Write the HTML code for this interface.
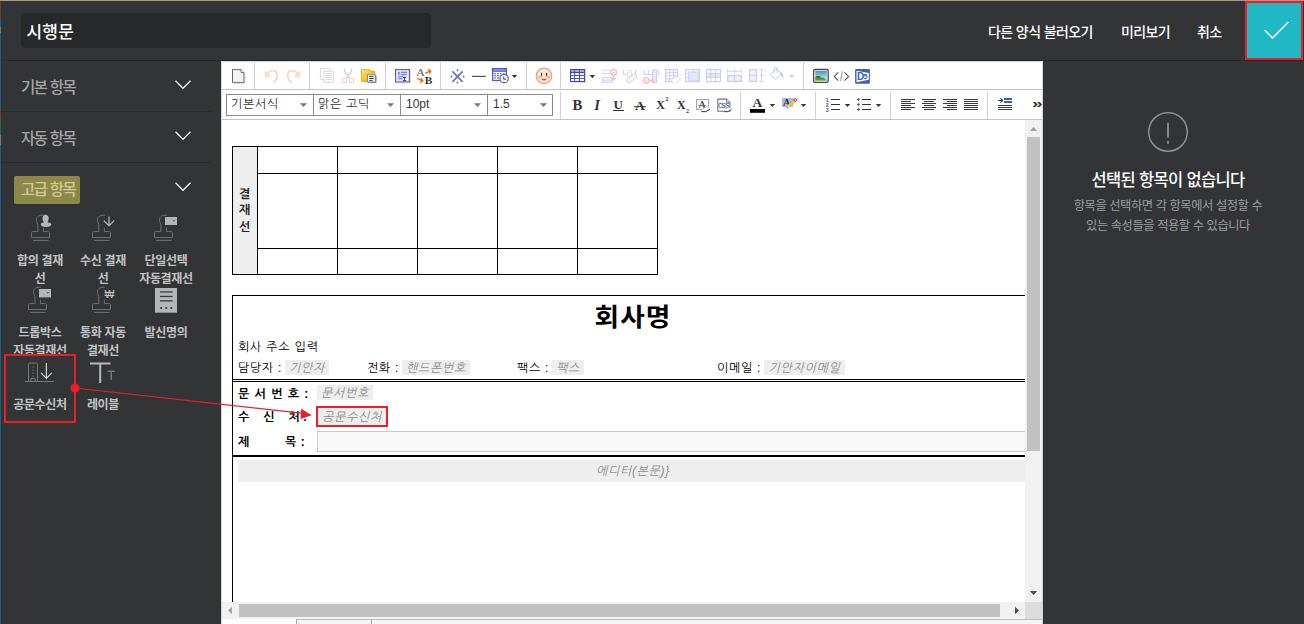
<!DOCTYPE html>
<html lang="ko">
<head>
<meta charset="utf-8">
<title>시행문</title>
<style>
*{box-sizing:border-box;margin:0;padding:0}
html,body{width:1304px;height:624px;overflow:hidden;background:#333436}
body{position:relative;font-family:"Liberation Sans","Noto Sans CJK KR",sans-serif;color:#fff}
.abs{position:absolute}
#topline{left:0;top:0;width:1304px;height:1px;background:#b0948c}
#leftstrip{left:0;top:1px;width:1px;height:623px;background:linear-gradient(#6a4034 0 19px,#1d5f86 19px 26px,#6f7a84 26px 32px,#1d5f86 32px 109px,#7a3a30 109px 117px,#2a6a4a 117px 134px,#6f7a84 134px 144px,#1d5f86 144px)}
#topbar{left:0;top:0;width:1304px;height:61px;border-bottom:1px solid #27282a}
#title{left:21px;top:13px;width:410px;height:35px;background:#27282a;border-radius:4px}
#title span{position:absolute;left:5.5px;top:6px;font-size:17px;line-height:27px;font-weight:500;letter-spacing:0.2px;color:#fff}
.toplink{top:20.7px;font-size:14px;line-height:22px;font-weight:500;color:#fff;letter-spacing:-0.6px;white-space:nowrap}
#okbtn{left:1245px;top:1px;width:58px;height:59px;background:#1fb8c4;border:2px solid #e8202a}
.sec{left:21px;font-size:15.5px;line-height:24px;color:#a4a6a8;letter-spacing:-1.4px;white-space:nowrap;font-weight:500}
.hr{left:1px;width:210px;height:1px;background:#2a2b2d}
.chev{left:174px;width:18px;height:10px}
.item{width:80px;text-align:center;font-size:12px;line-height:18px;font-weight:700;color:#c2c3c4;letter-spacing:-0.3px;white-space:nowrap}
#editor{left:221px;top:61px;width:822px;height:563px;background:#fff}
.tbtxt{font-family:"Liberation Sans","NanumGothic",sans-serif;font-size:12px;line-height:20px;color:#333;white-space:nowrap;top:94px}
.ser{font-family:"Liberation Serif",serif;color:#333;white-space:nowrap;line-height:20px}
.doc{font-family:"Liberation Sans","NanumGothic",sans-serif;font-size:12px;line-height:16px;color:#000;white-space:nowrap;letter-spacing:0.7px}
.tag{background:#eee;color:#8c8c8c;font-style:italic;height:15px;line-height:17px;font-size:12px;font-family:"Liberation Sans","NanumGothic",sans-serif;white-space:nowrap;text-align:center;letter-spacing:0.7px;overflow:visible}
#rtitle{left:1018px;top:168px;width:300px;text-align:center;font-size:16.5px;line-height:24px;font-weight:500;color:#fff;letter-spacing:-0.65px}
#rdesc{left:1018px;top:197px;width:300px;text-align:center;font-size:12.3px;line-height:19.5px;color:#9c9ea0;letter-spacing:-0.45px}
</style>
</head>
<body>
<div class="abs" id="topbar"></div>
<div class="abs" id="topline"></div>
<div class="abs" id="leftstrip"></div>
<div class="abs" id="title"><span>시행문</span></div>
<div class="abs toplink" style="left:988px">다른 양식 불러오기</div>
<div class="abs toplink" style="left:1121px">미리보기</div>
<div class="abs toplink" style="left:1197px">취소</div>
<div class="abs" id="okbtn"><svg width="54" height="55" viewBox="0 0 54 55"><path d="M17.5 27 L25.5 35 L41.5 19" fill="none" stroke="#fff" stroke-width="1.4"/></svg></div>
<div class="abs sec" style="top:76px">기본 항목</div>
<svg class="abs chev" style="top:80px" viewBox="0 0 18 10"><path d="M1.5 0.7 L9 8.3 L16.5 0.7" fill="none" stroke="#f4f4f4" stroke-width="1.25"/></svg>
<div class="abs hr" style="top:111px"></div>
<div class="abs sec" style="top:127px">자동 항목</div>
<svg class="abs chev" style="top:131px" viewBox="0 0 18 10"><path d="M1.5 0.7 L9 8.3 L16.5 0.7" fill="none" stroke="#f4f4f4" stroke-width="1.25"/></svg>
<div class="abs hr" style="top:162px"></div>
<div class="abs" style="left:14px;top:176px;width:66px;height:28px;background:#8c8848;border-radius:2px"></div>
<div class="abs sec" style="top:178px;color:#cfcb94">고급 항목</div>
<svg class="abs chev" style="top:182px" viewBox="0 0 18 10"><path d="M1.5 0.7 L9 8.3 L16.5 0.7" fill="none" stroke="#f4f4f4" stroke-width="1.25"/></svg>
<div class="abs item" style="left:0px;top:252px">합의 결재<br>선</div>
<div class="abs item" style="left:63px;top:252px">수신 결재<br>선</div>
<div class="abs item" style="left:126px;top:252px">단일선택<br>자동결재선</div>
<div class="abs item" style="left:0px;top:324px">드롭박스<br>자동결재선</div>
<div class="abs item" style="left:63px;top:324px">통화 자동<br>결재선</div>
<div class="abs item" style="left:126px;top:324px">발신명의</div>
<div class="abs" style="left:4px;top:354px;width:72px;height:69px;background:#333436;border:2px solid #e8202a"></div>
<div class="abs item" style="left:0px;top:396px">공문수신처</div>
<div class="abs item" style="left:63px;top:396px">레이블</div>
<div class="abs" id="editor"></div>
<div class="abs tbtxt" style="left:231px;letter-spacing:0.7px">기본서식</div>
<div class="abs tbtxt" style="left:318px;letter-spacing:0.7px">맑은 고딕</div>
<div class="abs tbtxt" style="left:406px">10pt</div>
<div class="abs tbtxt" style="left:493px">1.5</div>
<div class="abs ser" style="left:752.5px;top:92.5px;font-size:13.5px;font-weight:bold">A</div>
<div class="abs" style="left:1031.5px;top:94px;font-size:15px;line-height:20px;font-weight:bold;color:#333;font-family:'Liberation Sans',sans-serif;transform:scale(1.28,0.82);transform-origin:0 55%">»</div>
<div class="abs" style="left:233px;top:147px;width:24px;height:127px;background:#eee"></div>
<div class="abs doc" style="left:233px;top:186px;width:24px;text-align:center;font-weight:bold;line-height:16.3px;color:#222">결<br>재<br>선</div>
<div class="abs" style="left:432.5px;top:299.6px;width:400px;text-align:center;font-family:'Liberation Sans','Noto Sans CJK KR',sans-serif;font-size:24.5px;line-height:36px;font-weight:bold;color:#000;letter-spacing:1px;transform:scaleX(1.09)">회사명</div>
<div class="abs doc" style="left:238px;top:339px;letter-spacing:0.8px">회사 주소 입력</div>
<div class="abs doc" style="left:238px;top:360px">담당자 :</div>
<div class="abs tag" style="left:285px;top:360px;width:44px">기안자</div>
<div class="abs doc" style="left:367px;top:360px">전화 :</div>
<div class="abs tag" style="left:402px;top:360px;width:68px">핸드폰번호</div>
<div class="abs doc" style="left:517px;top:360px">팩스 :</div>
<div class="abs tag" style="left:552px;top:360px;width:32px">팩스</div>
<div class="abs doc" style="left:717px;top:360px">이메일 :</div>
<div class="abs tag" style="left:764px;top:360px;width:81px">기안자이메일</div>
<div class="abs doc" style="left:238px;top:386px;font-weight:bold;letter-spacing:5.3px">문서번호:</div>
<div class="abs tag" style="left:317px;top:385px;width:56px">문서번호</div>
<div class="abs doc" style="left:238px;top:408.5px;font-weight:bold;word-spacing:9.2px">수 신 처<span style="margin-left:2.5px">:</span></div>
<div class="abs" style="left:316px;top:406px;width:72px;height:21px;border:2px solid #e8202a;background:#eee"></div>
<div class="abs tag" style="left:318px;top:409px;width:68px;background:none">공문수신처</div>
<div class="abs doc" style="left:238px;top:434px;font-weight:bold">제</div>
<div class="abs doc" style="left:285px;top:434px;font-weight:bold;letter-spacing:4.5px">목:</div>
<div class="abs" style="left:317px;top:431px;width:709px;height:21px;border:1px solid #c8c8c8;border-right:none;background:#f9f9f9"></div>
<div class="abs" style="left:238px;top:460px;width:788px;height:22px;background:#eee"></div>
<div class="abs tag" style="left:560px;top:463px;width:146px;background:none;height:16px;line-height:17px">에디터(본문)}</div>
<svg class="abs" style="left:0;top:0" width="1304" height="624" viewBox="0 0 1304 624">
<g shape-rendering="crispEdges">
<rect x="221" y="61" width="822" height="1" fill="#d4d4d4"/><rect x="221" y="61" width="1" height="563" fill="#d4d4d4"/><rect x="1042" y="61" width="1" height="563" fill="#d4d4d4"/>
<rect x="222" y="89" width="820" height="1" fill="#c4c4c4"/><rect x="222" y="119" width="820" height="1" fill="#c4c4c4"/>
<rect x="254" y="62" width="1" height="27" fill="#cfcfcf"/>
<rect x="309" y="62" width="1" height="27" fill="#cfcfcf"/>
<rect x="385" y="62" width="1" height="27" fill="#cfcfcf"/>
<rect x="440" y="62" width="1" height="27" fill="#cfcfcf"/>
<rect x="526" y="62" width="1" height="27" fill="#cfcfcf"/>
<rect x="560" y="62" width="1" height="27" fill="#cfcfcf"/>
<rect x="803" y="62" width="1" height="27" fill="#cfcfcf"/>
<rect x="560" y="92" width="1" height="27" fill="#cfcfcf"/>
<rect x="740" y="92" width="1" height="27" fill="#cfcfcf"/>
<rect x="815" y="92" width="1" height="27" fill="#cfcfcf"/>
<rect x="890" y="92" width="1" height="27" fill="#cfcfcf"/>
<rect x="987" y="92" width="1" height="27" fill="#cfcfcf"/>
<rect x="226.5" y="94.5" width="326" height="21" fill="none" stroke="#8a8a8a"/>
<rect x="313" y="95" width="1" height="20" fill="#8a8a8a"/>
<rect x="400" y="95" width="1" height="20" fill="#8a8a8a"/>
<rect x="487" y="95" width="1" height="20" fill="#8a8a8a"/>
</g>
<path d="M300.0 103.3 h7 l-3.5 3.6z" fill="#777"/>
<path d="M387.0 103.3 h7 l-3.5 3.6z" fill="#777"/>
<path d="M474.0 103.3 h7 l-3.5 3.6z" fill="#777"/>
<path d="M540.0 103.3 h7 l-3.5 3.6z" fill="#777"/>
<path d="M511.8 74.9 h5.4 l-2.7 3.1z" fill="#333"/>
<path d="M589.7 75.1 h5.4 l-2.7 3.1z" fill="#333"/>
<path d="M789.1 74.9 h5.4 l-2.7 3.1z" fill="#cfcfcf"/>
<path d="M769.7 103.9 h5.4 l-2.7 3.1z" fill="#333"/>
<path d="M800.8 103.9 h5.4 l-2.7 3.1z" fill="#333"/>
<path d="M844.8 103.9 h5.4 l-2.7 3.1z" fill="#333"/>
<path d="M875.8 103.9 h5.4 l-2.7 3.1z" fill="#333"/>
<g shape-rendering="crispEdges">
<rect x="1025" y="120" width="17" height="482" fill="#f1f1f1"/><rect x="1027" y="137" width="13" height="314" fill="#c1c1c1"/>
<rect x="222" y="602" width="803" height="17" fill="#f1f1f1"/><rect x="239" y="604" width="761" height="13" fill="#c1c1c1"/>
<rect x="1025" y="602" width="17" height="17" fill="#dcdcdc"/>
<rect x="297" y="619" width="745" height="5" fill="#f4f4f4"/><rect x="296" y="619" width="746" height="1" fill="#bdbdbd"/><rect x="296" y="619" width="1" height="5" fill="#a8a8a8"/><rect x="371" y="619" width="1" height="5" fill="#a8a8a8"/>
</g>
<path d="M1029.8 131 h7.4 l-3.7 -4z" fill="#a3a3a3"/><path d="M1029.8 591 h7.4 l-3.7 4z" fill="#505050"/>
<path d="M232 606.8 v7.4 l-4 -3.7z" fill="#a3a3a3"/><path d="M1015 606.8 v7.4 l4 -3.7z" fill="#505050"/>
<g shape-rendering="crispEdges" fill="#000">
<rect x="232" y="146" width="426" height="1"/>
<rect x="257" y="173" width="401" height="1"/>
<rect x="257" y="248" width="401" height="1"/>
<rect x="232" y="274" width="426" height="1"/>
<rect x="232" y="146" width="1" height="129"/>
<rect x="257" y="146" width="1" height="129"/>
<rect x="337" y="146" width="1" height="129"/>
<rect x="417" y="146" width="1" height="129"/>
<rect x="497" y="146" width="1" height="129"/>
<rect x="577" y="146" width="1" height="129"/>
<rect x="657" y="146" width="1" height="129"/>
<rect x="232" y="295" width="793" height="1"/><rect x="232" y="295" width="1" height="307"/>
<rect x="233" y="379" width="792" height="1"/><rect x="233" y="381" width="792" height="1"/>
<rect x="233" y="455" width="792" height="2"/>
</g>
<g transform="translate(31 214)" fill="none" stroke="#6e7072" stroke-width="1">
<path d="M6.9 17.6 H1.5 Q0.5 17.6 0.5 18.6 V23.6 H18.5 V18.6 Q18.5 17.6 17.5 17.6 H12.4"/>
<path d="M6.9 17.6 V12 C6.9 9.5 5.4 8 5.4 5.8 C5.4 3 7.8 1.2 11 1.2 H13"/>
<path d="M12.4 17.6 V13.6"/><path d="M2 26.4 H17.5"/></g>
<ellipse cx="45.6" cy="218.4" rx="3.1" ry="3.5" fill="#b6b7b8"/><rect x="43.8" y="220" width="3.8" height="3.4" fill="#b6b7b8"/><ellipse cx="46" cy="224.6" rx="5.2" ry="2.3" fill="#b6b7b8"/><path d="M43.4 216.4 L45.4 214.6 L47.6 215.6z" fill="#b6b7b8"/>
<g transform="translate(92 214)" fill="none" stroke="#6e7072" stroke-width="1">
<path d="M6.9 17.6 H1.5 Q0.5 17.6 0.5 18.6 V23.6 H18.5 V18.6 Q18.5 17.6 17.5 17.6 H12.4"/>
<path d="M6.9 17.6 V12 C6.9 9.5 5.4 8 5.4 5.8 C5.4 3 7.8 1.2 11 1.2 H13"/>
<path d="M12.4 17.6 V13.6"/><path d="M2 26.4 H17.5"/></g>
<path d="M109 216.5 V225 M103.8 220.6 L109 225.6 L114.2 220.6" fill="none" stroke="#bbbcbd" stroke-width="1.2"/>
<g transform="translate(154 214)" fill="none" stroke="#6e7072" stroke-width="1">
<path d="M6.9 17.6 H1.5 Q0.5 17.6 0.5 18.6 V23.6 H18.5 V18.6 Q18.5 17.6 17.5 17.6 H12.4"/>
<path d="M6.9 17.6 V12 C6.9 9.5 5.4 8 5.4 5.8 C5.4 3 7.8 1.2 11 1.2 H13"/>
<path d="M12.4 17.6 V13.6"/><path d="M2 26.4 H17.5"/></g>
<rect x="165" y="217" width="12" height="8" fill="#b4b5b6"/><path d="M172.6 219.8 l1.4 1.4 l1.4 -1.4" fill="none" stroke="#444" stroke-width="0.8"/>
<g transform="translate(28 286)" fill="none" stroke="#6e7072" stroke-width="1">
<path d="M6.9 17.6 H1.5 Q0.5 17.6 0.5 18.6 V23.6 H18.5 V18.6 Q18.5 17.6 17.5 17.6 H12.4"/>
<path d="M6.9 17.6 V12 C6.9 9.5 5.4 8 5.4 5.8 C5.4 3 7.8 1.2 11 1.2 H13"/>
<path d="M12.4 17.6 V13.6"/><path d="M2 26.4 H17.5"/></g>
<rect x="39" y="289" width="12" height="8.4" fill="#b4b5b6"/><path d="M46.6 291.8 l1.4 1.4 l1.4 -1.4" fill="none" stroke="#444" stroke-width="0.8"/>
<g transform="translate(92 286)" fill="none" stroke="#6e7072" stroke-width="1">
<path d="M6.9 17.6 H1.5 Q0.5 17.6 0.5 18.6 V23.6 H18.5 V18.6 Q18.5 17.6 17.5 17.6 H12.4"/>
<path d="M6.9 17.6 V12 C6.9 9.5 5.4 8 5.4 5.8 C5.4 3 7.8 1.2 11 1.2 H13"/>
<path d="M12.4 17.6 V13.6"/><path d="M2 26.4 H17.5"/></g>
<text x="109.5" y="297.6" text-anchor="middle" font-family="Liberation Sans, sans-serif" font-size="10.5" fill="#c2c3c4">₩</text>
<rect x="155" y="288" width="22" height="24.7" fill="#b4b5b6"/>
<g fill="#3a3b3d"><rect x="160" y="291.3" width="12.6" height="1.3"/><rect x="160" y="295.8" width="12.6" height="1.3"/><rect x="160" y="300.2" width="12.6" height="1.3"/>
<circle cx="161.2" cy="308" r="1.1"/><circle cx="166.2" cy="308" r="1.1"/><circle cx="171.2" cy="308" r="1.1"/></g>
<g fill="none" stroke="#77797b" stroke-width="1"><path d="M28.5 381 V364.5 Q28.5 363 30 363 H36 Q37.5 363 37.5 364.5 V381"/><path d="M25 381.5 H54"/><path d="M30.8 381 V378.6 H35.2 V381"/></g>
<g fill="#77797b"><rect x="32.4" y="366.6" width="1.3" height="1"/><rect x="32.4" y="369.6" width="1.3" height="1"/><rect x="32.4" y="372.6" width="1.3" height="1"/><rect x="32.4" y="375.6" width="1.3" height="1"/></g>
<path d="M46.4 363 V378 M41 372.8 L46.4 378.4 L51.8 372.8" fill="none" stroke="#d0d1d2" stroke-width="1.2"/>
<path d="M90 363.6 H110.6 M100.2 363.6 V383" fill="none" stroke="#b8b9ba" stroke-width="2"/>
<path d="M107.6 371.3 H114.8 M111.2 371.3 V379.8" fill="none" stroke="#77797b" stroke-width="1.5"/>
<circle cx="75" cy="388" r="4.6" fill="#e8202a"/>
<path d="M75 388 L303 413.4" stroke="#e8202a" stroke-width="1.2" fill="none"/>
<path d="M311.8 415.3 L301.2 408.7 L300.6 418.9z" fill="#e8202a"/><path d="M232.5 69.6 H241 L244 72.6 V82.4 H232.5z" fill="#f4f4f4" stroke="#666" stroke-width="1"/><path d="M241 69.6 V72.6 H244" fill="#fff" stroke="#666" stroke-width="0.9"/><path d="M233.2 83.2 H244.9 V73.6" fill="none" stroke="#bdbdbd" stroke-width="0.8"/>
<g><path d="M267.6 73.6 C270.2 69.4 277.6 69 277.2 76 C277 79 275.6 81 273.6 82.4" fill="none" stroke="#f7d6c2" stroke-width="1.7" stroke-linecap="round"/><path d="M265.2 71.2 V76.8 H270.8z" fill="#fde0c0" stroke="#f7d6c2" stroke-width="0.8"/></g>
<g transform="translate(565 0) scale(-1 1)"><path d="M267.6 73.6 C270.2 69.4 277.6 69 277.2 76 C277 79 275.6 81 273.6 82.4" fill="none" stroke="#f7d6c2" stroke-width="1.7" stroke-linecap="round"/><path d="M265.2 71.2 V76.8 H270.8z" fill="#fde0c0" stroke="#f7d6c2" stroke-width="0.8"/></g>
<g fill="#fafafa" stroke="#dedede" stroke-width="1.1"><rect x="320.4" y="68.5" width="10" height="11" rx="1"/><rect x="323.8" y="71.5" width="10" height="11" rx="1"/></g>
<path d="M325.6 73.7h6.4M325.6 75.6h6.4M325.6 77.5h6.4M325.6 79.6h6.4" stroke="#d9d9d9" stroke-width="0.9"/>
<path d="M344.2 69.2 Q344.8 72.6 347.4 74.6 L349.6 78.4 M351.8 69.2 Q351.2 72.6 348.6 74.6 L346.4 78.4" stroke="#d4d4d4" stroke-width="1.5" fill="none" stroke-linecap="round"/>
<rect x="342.6" y="78.2" width="4" height="4.4" rx="1" fill="#fff" stroke="#f8cfbf" stroke-width="1.1"/><rect x="349.6" y="78.2" width="4" height="4.4" rx="1" fill="#fff" stroke="#f8cfbf" stroke-width="1.1"/>
<linearGradient id="fg" x1="0" y1="0" x2="1" y2="1"><stop offset="0" stop-color="#fdea90"/><stop offset="0.5" stop-color="#f6c335"/><stop offset="1" stop-color="#e59d10"/></linearGradient>
<path d="M361.4 70.4 Q361.4 69.4 362.4 69.4 H364.8 Q365.6 69.4 365.8 70 H366.6 Q366.8 69.5 367.4 69.5 H369 Q369.8 69.5 370 70.6 L370.4 71.2 H373.8 Q374.8 71.2 374.8 72.2 V81.4 H362.4 Q361.4 81.4 361.4 80.4z" fill="url(#fg)" stroke="#e0a008" stroke-width="0.9"/>
<rect x="367.5" y="74.8" width="7.8" height="7.2" fill="#fff" stroke="#8a8a90" stroke-width="1"/><path d="M368 82.6H376V75.4" fill="none" stroke="#777" stroke-width="0.9"/><path d="M369.2 76.6h4.4M369.2 78.5h4.4M369.2 80.4h3.6" stroke="#444" stroke-width="1"/>
<rect x="395.6" y="69.6" width="13.8" height="12.4" fill="#fff" stroke="#5d6982" stroke-width="1.3"/><path d="M396.4 83H410.4V70.6" fill="none" stroke="#c5cad6" stroke-width="0.8"/><rect x="397.4" y="71.2" width="10.2" height="9.6" fill="#d3d8fc"/>
<path d="M401.3 72.4h5.8M401.3 74.5h5.8M397.9 76.7h5M397.9 78.8h4.6" stroke="#6f7fee" stroke-width="1.1"/><rect x="397.9" y="71.9" width="1.7" height="2.8" fill="#6f7fee"/><rect x="403" y="77.2" width="4.4" height="3.6" fill="#fff"/><path d="M403 77.7h3.2M404.6 77.7v3M403 80.7h3.2" stroke="#222" stroke-width="0.9" fill="none"/>
<text x="416.4" y="75.8" font-family="Liberation Serif, serif" font-weight="bold" font-size="11.3" fill="#808080">A</text><text x="424.8" y="83.7" font-family="Liberation Serif, serif" font-weight="bold" font-size="11.3" fill="#333">B</text>
<path d="M425.2 73.4 L429.8 71.2 M428 69.4 L430.8 71 L429.4 73.8" stroke="#f0640c" stroke-width="1.3" fill="none"/><path d="M417.4 78.4 L422 80.6 M421 78 L422.8 80.8 L420 82.6" stroke="#f0640c" stroke-width="1.3" fill="none"/>
<path d="M452.4 71.4 L462.6 81.8 M462.6 71.4 L452.4 81.8" stroke="#6e7ba8" stroke-width="1.8" fill="none"/>
<g fill="#6e7ba8"><path d="M457.5 68.9 l1.2 1.3 l-1.2 1.3 l-1.2 -1.3z M457.5 81.2 l1.2 1.3 l-1.2 1.3 l-1.2 -1.3z M451.3 75.2 l1.2 1.3 l-1.2 1.3 l-1.2 -1.3z M463.7 75.2 l1.2 1.3 l-1.2 1.3 l-1.2 -1.3z"/></g>
<rect x="472" y="75.8" width="13.8" height="1.2" fill="#555"/>
<rect x="492.7" y="68.6" width="13.7" height="11.9" fill="#fff" stroke="#4a5ad0" stroke-width="1.3"/><rect x="492.1" y="68" width="14.9" height="3.8" fill="#4a5ad0"/><rect x="493.6" y="69.4" width="12" height="1.1" fill="#a9b5f5"/>
<rect x="494.1" y="73.2" width="2" height="1.1" fill="#5a6ad8"/>
<rect x="497" y="73.2" width="2" height="1.1" fill="#5a6ad8"/>
<rect x="499.9" y="73.2" width="2" height="1.1" fill="#5a6ad8"/>
<rect x="502.8" y="73.2" width="2" height="1.1" fill="#5a6ad8"/>
<rect x="494.1" y="75.3" width="2" height="1.1" fill="#5a6ad8"/>
<rect x="497" y="75.3" width="2" height="1.1" fill="#5a6ad8"/>
<rect x="499.9" y="75.3" width="2" height="1.1" fill="#5a6ad8"/>
<rect x="502.8" y="75.3" width="2" height="1.1" fill="#5a6ad8"/>
<rect x="494.1" y="77.4" width="2" height="1.1" fill="#5a6ad8"/>
<rect x="497" y="77.4" width="2" height="1.1" fill="#5a6ad8"/>
<rect x="499.9" y="77.4" width="2" height="1.1" fill="#5a6ad8"/>
<rect x="502.8" y="77.4" width="2" height="1.1" fill="#5a6ad8"/>
<circle cx="504.1" cy="78.7" r="4.2" fill="#fff" stroke="#56628c" stroke-width="1.2"/><path d="M503.8 76.4 V79.2 H506" fill="none" stroke="#444" stroke-width="1"/>
<circle cx="544" cy="75.9" r="7.7" fill="#fde5d5" stroke="#e8a080" stroke-width="1.3"/><ellipse cx="539.4" cy="77" rx="1.7" ry="1.1" fill="#eab098"/><ellipse cx="548.6" cy="77" rx="1.7" ry="1.1" fill="#eab098"/><rect x="541" y="72.8" width="1.1" height="3.4" fill="#5a2a1a"/><rect x="546.1" y="72.8" width="1.1" height="3.4" fill="#5a2a1a"/><path d="M540.8 78.2 Q544 79.6 547.2 78.2 Q544 82.8 540.8 78.2z" fill="#e83a20"/>
<rect x="570" y="69" width="15.2" height="13" fill="#3e47b9"/><path d="M570.8 82.6H585.8V70" fill="none" stroke="#d8d4c4" stroke-width="0.7"/>
<rect x="571.1" y="70.1" width="3.1" height="1.7" fill="#b4bcf5"/>
<rect x="575.1" y="70.1" width="4" height="1.7" fill="#b4bcf5"/>
<rect x="580" y="70.1" width="4" height="1.7" fill="#b4bcf5"/>
<rect x="571.1" y="73.1" width="3.1" height="2" fill="#fff"/>
<rect x="575.1" y="73.1" width="4" height="2" fill="#fff"/>
<rect x="580" y="73.1" width="4" height="2" fill="#fff"/>
<rect x="571.1" y="76" width="3.1" height="2" fill="#fff"/>
<rect x="575.1" y="76" width="4" height="2" fill="#fff"/>
<rect x="580" y="76" width="4" height="2" fill="#fff"/>
<rect x="571.1" y="78.9" width="3.1" height="2" fill="#fff"/>
<rect x="575.1" y="78.9" width="4" height="2" fill="#fff"/>
<rect x="580" y="78.9" width="4" height="2" fill="#fff"/>
<path d="M602 70.2h8.6M602 73.5h8.6" stroke="#cdd4f7" stroke-width="1"/><rect x="602.3" y="77.3" width="9.9" height="5.2" fill="#eef1fd" stroke="#cdd4f7" stroke-width="1"/><path d="M602.3 80.2h9.9" stroke="#cdd4f7" stroke-width="0.9"/>
<circle cx="613.6" cy="72.3" r="2.9" fill="#fff" stroke="#f7c0c4" stroke-width="1.4"/><path d="M612 72.3h3.2M613.6 70.7v3.2" stroke="#f7c2c6" stroke-width="0.9"/><path d="M613.6 75.6V79" stroke="#f7c0c4" stroke-width="1.2" fill="none"/><path d="M611 78h5.2l-2.6 3z" fill="#f7c0c4"/>
<path d="M623.5 69.8V74.2H627M635.6 69.8V74.2H633" stroke="#c9d0f6" stroke-width="1" fill="none"/><rect x="628" y="70" width="3.4" height="6" fill="#f4f4f4"/><path d="M627.6 70V79.5M631.6 70V75" stroke="#f7b9be" stroke-width="1" stroke-dasharray="1 1.1" fill="none"/>
<rect x="625.8" y="76" width="11.4" height="4.6" rx="2.3" transform="rotate(-36 631.5 78.3)" fill="#f3f3f3" stroke="#d6d6d6" stroke-width="0.9"/>
<path d="M644.2 70V74.4H658.7V70M648.3 70V74.4" stroke="#c9cdf1" stroke-width="1" fill="none"/><rect x="652.6" y="70" width="4" height="12.6" fill="#e6e9fc" stroke="#c9cdf1" stroke-width="1"/>
<circle cx="646.3" cy="80.4" r="2.8" fill="#fff" stroke="#f7c0c4" stroke-width="1.4"/><path d="M644.7 80.4h3.2M646.3 78.8v3.2" stroke="#f9cdd0" stroke-width="0.9"/><path d="M649.4 80.4H652" stroke="#f7c0c4" stroke-width="1.2"/><path d="M651.4 77.9v5l3.2-2.5z" fill="#f7c0c4"/>
<rect x="665.6" y="69.6" width="12" height="12" fill="#fff" stroke="#c9cdf1" stroke-width="1.2"/><path d="M665.6 72.8h12M665.6 75.8h12M665.6 78.8h12M669.7 69.6v12M673.7 69.6v12" stroke="#c9cdf1" stroke-width="1"/><rect x="671.6" y="77.6" width="9" height="5" rx="2.5" transform="rotate(-28 676 80)" fill="#fafafa" stroke="#e2e2e2" stroke-width="0.8"/>
<rect x="685.7" y="69.6" width="13.8" height="12" fill="#fff" stroke="#c9cdf1" stroke-width="1.2"/><rect x="688.8" y="72" width="10.2" height="9.2" fill="#e4e7fc" stroke="#c9cdf1" stroke-width="1"/><path d="M693.4 69.6v2.4M685.7 73.6h3M685.7 77.5h3" stroke="#c9cdf1" stroke-width="0.9"/>
<rect x="706.7" y="69.6" width="13.8" height="12" fill="#fff" stroke="#c9cdf1" stroke-width="1.2"/><rect x="707.2" y="73.5" width="12.8" height="3.8" fill="#e4e7fc"/><path d="M706.7 73.5h13.8M706.7 77.3h13.8M710.8 69.6v12M715.6 69.6v12" stroke="#c9cdf1" stroke-width="1"/>
<path d="M727.4 69v4.5M734.6 69v4.5M741.8 69v4.5M727.4 71.2h14.4" stroke="#cfd0de" stroke-width="0.9" fill="none"/><rect x="727.7" y="75.6" width="13.8" height="5.8" fill="#eceefd" stroke="#c9cdf1" stroke-width="1.2"/><path d="M734.6 75.6v5.8" stroke="#c9cdf1" stroke-width="1"/>
<rect x="749.6" y="69.7" width="6.8" height="11.7" fill="#f2f3fe" stroke="#c9cdf1" stroke-width="1.2"/><path d="M749.6 75.5h6.8" stroke="#c9cdf1" stroke-width="1"/><path d="M759.2 69.6h4.6M759.2 75.5h4.6M759.2 81.4h4.6M761.5 69.6v11.8" stroke="#d4d4d4" stroke-width="0.9" fill="none"/>
<path d="M770.3 74.4 L776 69.4 L781.6 73.2 L775.4 79.5z" fill="#fff" stroke="#c3c9f0" stroke-width="1"/><path d="M774 72.6 V69 Q774 67.2 775.6 67.2 Q777.2 67.2 777.2 69 V73" fill="none" stroke="#b9c3ea" stroke-width="0.9"/><path d="M779.6 71.6 Q783.6 72.4 783.8 79 Q782.4 75.8 780 75z" fill="#b4cdf0"/>
<linearGradient id="sky" x1="0" y1="0" x2="0" y2="1"><stop offset="0" stop-color="#4b97bd"/><stop offset="0.55" stop-color="#8fcbe6"/><stop offset="1" stop-color="#d6eef9"/></linearGradient><linearGradient id="hill" x1="0" y1="0" x2="0" y2="1"><stop offset="0" stop-color="#35651d"/><stop offset="1" stop-color="#73b146"/></linearGradient>
<rect x="813.6" y="69.5" width="14.6" height="12.8" rx="1.4" fill="#fff" stroke="#474747" stroke-width="1.3"/><rect x="815.2" y="71" width="11.6" height="9.8" fill="url(#sky)"/><path d="M815.2 80.8 V77.4 Q816.4 76 817.4 76 H819 Q820 76 821 77.4 L821.6 78 Q822.4 77 823.2 77.6 L826.8 80.2 V80.8z" fill="url(#hill)"/>
<path d="M838.2 72.3 L834.3 76.5 L838.2 80.7 M844.4 72.3 L848.7 76.5 L844.4 80.7" fill="none" stroke="#636363" stroke-width="1.15"/><path d="M842.3 71.2 L840.6 81" stroke="#a4abc8" stroke-width="1.3"/>
<rect x="855.1" y="68.9" width="14.8" height="14.9" rx="1.4" fill="#3a62b8"/><path d="M856.5 70.7 L868.8 73 V79.8 L856.5 82.2z" fill="#fff"/><text x="857" y="80" font-family="Liberation Sans, sans-serif" font-weight="bold" font-size="10" fill="#3a62b8">D</text><text x="863.6" y="79.2" font-family="Liberation Sans, sans-serif" font-weight="bold" font-size="7.2" fill="#3a62b8">5</text><text x="572.4" y="109.8" font-size="14.7" font-family="Liberation Serif, serif" font-weight="bold" fill="#333">B</text>
<text x="594.2" y="109.8" font-size="14.7" font-style="italic" font-family="Liberation Serif, serif" font-weight="bold" fill="#333">I</text>
<text x="613.6" y="109" font-size="13" font-family="Liberation Serif, serif" font-weight="bold" fill="#333">U</text><rect x="613" y="110" width="11" height="1" fill="#333"/>
<text x="635" y="109.6" font-size="13.5" font-family="Liberation Serif, serif" font-weight="bold" fill="#333">A</text><rect x="634" y="106.2" width="12" height="1" fill="#333"/>
<text x="656.2" y="109" font-size="12" font-family="Liberation Serif, serif" font-weight="bold" fill="#333">X</text><text x="665.2" y="100.9" font-size="6" font-family="Liberation Serif, serif" font-weight="bold" fill="#333">2</text>
<text x="677" y="109" font-size="12" font-family="Liberation Serif, serif" font-weight="bold" fill="#333">X</text><text x="686" y="112.8" font-size="6" font-family="Liberation Serif, serif" font-weight="bold" fill="#333">2</text>
<rect x="696.6" y="99.6" width="12" height="9.8" fill="#fff" stroke="#8c98d2" stroke-width="1"/><text x="702" y="107.9" text-anchor="middle" font-family="Liberation Serif, serif" font-weight="bold" font-size="10" fill="#555">A</text><path d="M698.4 105.6h7.4" stroke="#555" stroke-width="0.8"/><rect x="701.6" y="107.6" width="8.4" height="3.8" rx="1.9" transform="rotate(-18 705.8 109.5)" fill="#fff" stroke="#bbb" stroke-width="0.7"/><path d="M701.4 111.6 Q706 112.6 709.8 109.4" fill="none" stroke="#444" stroke-width="1"/>
<path d="M717.8 99.1 H726.6 L729.9 102.4 V111.2 H717.8z" fill="#fbfbfb" stroke="#777" stroke-width="1.1"/><path d="M726.6 99.1 V102.4 H729.9" fill="#e4e4e4" stroke="#777" stroke-width="0.9"/><text x="723.4" y="107.9" text-anchor="middle" font-family="Liberation Sans, sans-serif" font-size="8.6" fill="#1d4fc4" letter-spacing="-0.7">css</text><rect x="724.6" y="107.8" width="6.8" height="3.6" rx="1.8" transform="rotate(-18 728 109.6)" fill="#fff" stroke="#bbb" stroke-width="0.7"/><path d="M724.4 111.7 Q728 112.4 731.2 109.8" fill="none" stroke="#444" stroke-width="1"/>
<rect x="750" y="109" width="15" height="3.8" fill="#000"/>
<rect x="782" y="98" width="11" height="8.9" fill="#a9b8f7"/><text x="786.8" y="105.9" text-anchor="middle" font-family="Liberation Serif, serif" font-weight="bold" font-size="10.3" fill="#2e2e3a">A</text>
<path d="M793.4 99.6 L795.6 101.6 L790 107 L787.8 105z" fill="#f7c531" stroke="#d89a18" stroke-width="0.5"/><path d="M793.4 99.6 Q795.4 97.8 796.4 99 Q797.4 100 795.6 101.6z" fill="#fff" stroke="#e01020" stroke-width="1"/><path d="M790 107 L787.8 105 L787.2 107.8z" fill="#fff" stroke="#c8c8c8" stroke-width="0.5"/><rect x="786.8" y="107.2" width="1.2" height="1" fill="#223a8a"/>
<g shape-rendering="crispEdges" fill="#333"><rect x="831" y="99" width="9" height="1"/><rect x="831" y="104" width="9" height="1"/><rect x="831" y="109" width="9" height="1"/><rect x="862" y="99" width="9" height="1"/><rect x="862" y="104" width="9" height="1"/><rect x="862" y="109" width="9" height="1"/></g>
<g font-family="Liberation Sans, sans-serif" font-weight="bold" font-size="5.2" fill="#44557f"><text x="825.8" y="101.7">1</text><text x="825.8" y="106.7">2</text><text x="825.8" y="111.8">3</text></g>
<path d="M858.5 97.9l1.6 1.6l-1.6 1.6l-1.6-1.6zM858.5 102.9l1.6 1.6l-1.6 1.6l-1.6-1.6zM858.5 107.9l1.6 1.6l-1.6 1.6l-1.6-1.6z" fill="#44557f"/>
<g shape-rendering="crispEdges" fill="#3a3a3a"><rect x="901" y="99" width="14" height="1"/><rect x="901" y="101" width="10" height="1"/><rect x="901" y="103" width="14" height="1"/><rect x="901" y="105" width="10" height="1"/><rect x="901" y="107" width="14" height="1"/><rect x="901" y="109" width="10" height="1"/></g>
<g shape-rendering="crispEdges" fill="#3a3a3a"><rect x="922" y="99" width="14" height="1"/><rect x="924" y="101" width="10" height="1"/><rect x="922" y="103" width="14" height="1"/><rect x="924" y="105" width="10" height="1"/><rect x="922" y="107" width="14" height="1"/><rect x="924" y="109" width="10" height="1"/></g>
<g shape-rendering="crispEdges" fill="#3a3a3a"><rect x="943" y="99" width="14" height="1"/><rect x="947" y="101" width="10" height="1"/><rect x="943" y="103" width="14" height="1"/><rect x="947" y="105" width="10" height="1"/><rect x="943" y="107" width="14" height="1"/><rect x="947" y="109" width="10" height="1"/></g>
<g shape-rendering="crispEdges" fill="#3a3a3a"><rect x="964" y="99" width="14" height="1"/><rect x="964" y="101" width="14" height="1"/><rect x="964" y="103" width="14" height="1"/><rect x="964" y="105" width="14" height="1"/><rect x="964" y="107" width="14" height="1"/><rect x="964" y="109" width="14" height="1"/></g>
<g shape-rendering="crispEdges"><rect x="1004" y="98" width="8" height="2" fill="#3a5fb8"/><rect x="1004" y="101" width="8" height="2" fill="#3a5fb8"/><rect x="998" y="105" width="14" height="1" fill="#3a3a3a"/><rect x="998" y="107" width="14" height="1" fill="#3a3a3a"/><rect x="998" y="109" width="14" height="1" fill="#3a3a3a"/></g>
<path d="M998 100.5h4.6M1000.4 98.3L1002.7 100.5L1000.4 102.7" stroke="#2a3a6a" stroke-width="1.1" fill="none"/>
</svg>
<svg class="abs" style="left:1146px;top:110px" width="44" height="44" viewBox="0 0 44 44"><circle cx="22" cy="22" r="19.3" fill="none" stroke="#8d8f91" stroke-width="1.5"/><rect x="21.1" y="12.6" width="1.8" height="15" fill="#8d8f91"/><rect x="21.1" y="31.2" width="1.8" height="2.6" fill="#8d8f91"/></svg>
<div class="abs" id="rtitle">선택된 항목이 없습니다</div>
<div class="abs" id="rdesc">항목을 선택하면 각 항목에서 설정할 수<br>있는 속성들을 적용할 수 있습니다</div>
</body>
</html>
